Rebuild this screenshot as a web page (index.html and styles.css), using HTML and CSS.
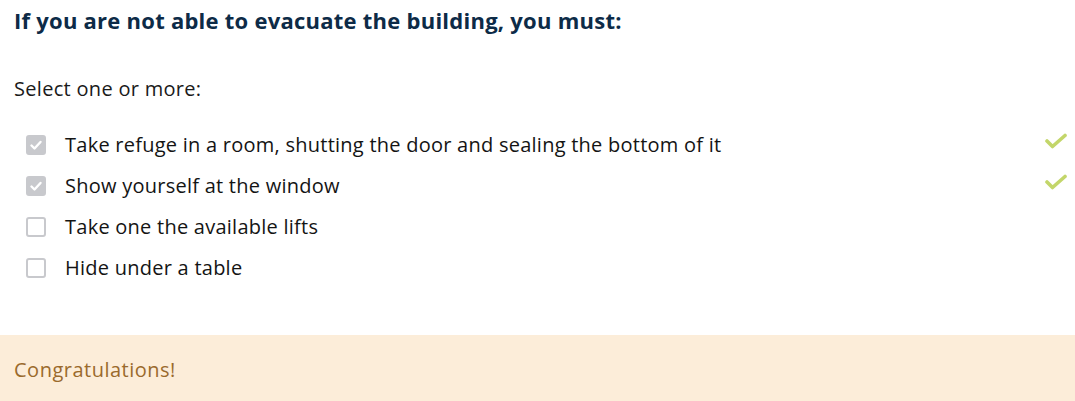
FILE: index.html
```html
<!DOCTYPE html>
<html lang="en">
<head>
<meta charset="utf-8">
<link rel="stylesheet" href="styles.css">
</head>
<body>
<div class="question">
  <h2 class="qtext">If you are not able to evacuate the building, you must:</h2>
  <p class="prompt">Select one or more:</p>
  <div class="answers">
    <div class="answer">
      <span class="box checked"><svg viewBox="0 0 20 20" width="20" height="20"><path d="M5.5 10.5l3 3 6-6.5" fill="none" stroke="#fff" stroke-width="2.4" stroke-linecap="round" stroke-linejoin="round"/></svg></span>
      <span class="label">Take refuge in a room, shutting the door and sealing the bottom of it</span>
      <svg class="tick" viewBox="0 0 24 16" width="24" height="16"><path d="M3 8l5.5 5.5 12.5-11" fill="none" stroke="#c3d66a" stroke-width="3.6" stroke-linecap="round" stroke-linejoin="round"/></svg>
    </div>
    <div class="answer">
      <span class="box checked"><svg viewBox="0 0 20 20" width="20" height="20"><path d="M5.5 10.5l3 3 6-6.5" fill="none" stroke="#fff" stroke-width="2.4" stroke-linecap="round" stroke-linejoin="round"/></svg></span>
      <span class="label">Show yourself at the window</span>
      <svg class="tick" viewBox="0 0 24 16" width="24" height="16"><path d="M3 8l5.5 5.5 12.5-11" fill="none" stroke="#c3d66a" stroke-width="3.6" stroke-linecap="round" stroke-linejoin="round"/></svg>
    </div>
    <div class="answer">
      <span class="box"></span>
      <span class="label">Take one the available lifts</span>
    </div>
    <div class="answer">
      <span class="box"></span>
      <span class="label">Hide under a table</span>
    </div>
  </div>
</div>
<div class="feedback">Congratulations!</div>
</body>
</html>
```
FILE: styles.css
```css
html, body {
  margin: 0;
  padding: 0;
  background: #fff;
}
body {
  font-family: "Open Sans", "Noto Sans", sans-serif;
  color: #1a1a1a;
}
.question {
  padding: 5px 7px 0 14px;
  height: 329px;
  box-sizing: border-box;
}
.qtext {
  margin: 0;
  font-family: "Open Sans", "Noto Sans", sans-serif;
  font-weight: 700;
  font-size: 22px;
  line-height: 30px;
  color: #0d2b47;
  letter-spacing: 0.25px;
}
.prompt {
  margin: 42px 0 0 0;
  font-size: 20px;
  line-height: 24px;
  letter-spacing: 0.3px;
  color: #1a1a1a;
}
.answers {
  margin-top: 32px;
  display: flex;
  flex-direction: column;
  gap: 17px;
}
.answer {
  display: flex;
  align-items: center;
  height: 24px;
  padding-left: 12px;
}
.box {
  width: 20px;
  height: 20px;
  box-sizing: border-box;
  border: 2px solid #c8c9cd;
  border-radius: 3px;
  flex: none;
  display: flex;
  align-items: center;
  justify-content: center;
}
.box.checked {
  background: #c8c9cd;
}
.box svg {
  flex: none;
}
.label {
  margin-left: 19px;
  font-size: 20px;
  line-height: 24px;
  letter-spacing: 0.25px;
  color: #141414;
  flex: 1;
}
.tick {
  flex: none;
  margin-top: -8px;
}
.feedback {
  background: #fcedd9;
  height: 66px;
  margin-top: 6px;
  padding: 2px 14px 0 14px;
  box-sizing: border-box;
  display: flex;
  align-items: center;
  font-size: 20px;
  letter-spacing: 0.5px;
  color: #9a6a2c;
}
```
